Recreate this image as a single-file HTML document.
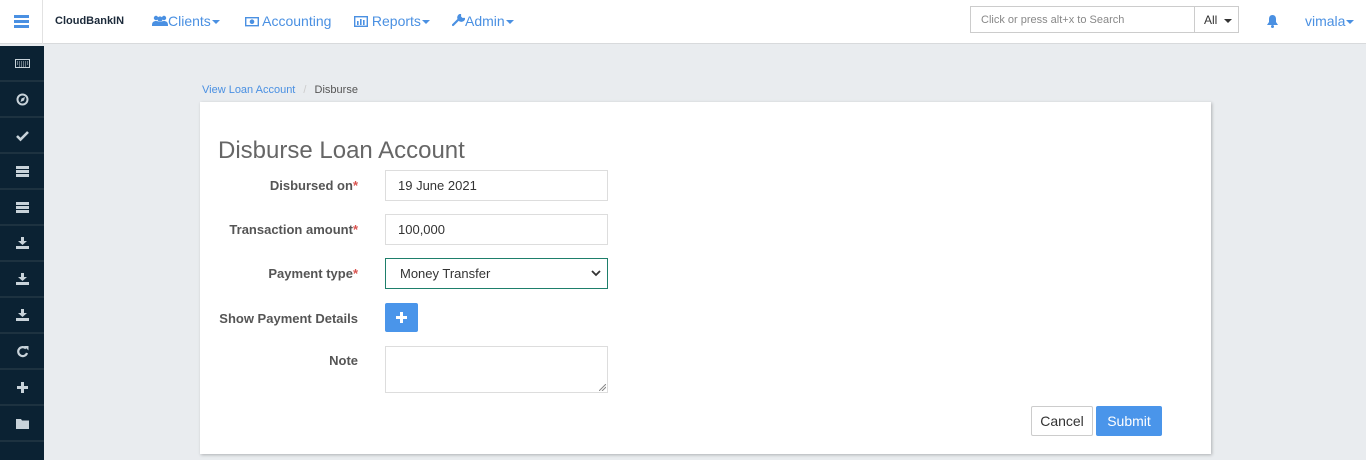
<!DOCTYPE html>
<html><head><meta charset="utf-8"><style>
*{box-sizing:border-box;margin:0;padding:0}
html,body{width:1366px;height:460px;overflow:hidden}
body{background:#e9ecef;font-family:"Liberation Sans",sans-serif;position:relative;font-size:13px;color:#333}
.hdr{position:absolute;left:0;top:0;width:1366px;height:44px;background:#fff;border-bottom:1px solid #d8dadc}
.ham{position:absolute;left:0;top:0;width:43px;height:44px;border-right:1px solid #e2e2e2}
.ham i{position:absolute;left:14px;width:15px;height:3px;background:#4a90e2}
.brand{position:absolute;left:55px;top:15px;font-weight:bold;font-size:11px;color:#1c2a3a}
.nav{position:absolute;top:13px;color:#4a90e2;font-size:14px;white-space:nowrap}
.car{display:inline-block;width:0;height:0;border-left:4px solid transparent;border-right:4px solid transparent;border-top:4px solid currentColor;vertical-align:middle;margin-left:1px}
.search{position:absolute;left:970px;top:6px;width:225px;height:27px;border:1px solid #ccc;border-right:none;color:#888;font-size:11px;padding:7px 10px;white-space:nowrap}
.all{position:absolute;left:1194px;top:6px;width:45px;height:27px;border:1px solid #ccc;font-size:12px;padding:6px 9px;color:#333;white-space:nowrap}
.side{position:absolute;left:0;top:46px;width:44px;height:414px;background:#0b2233;overflow:hidden}
.si{height:36px;border-bottom:2px solid #1d3240;display:flex;align-items:center;justify-content:center}
.si svg{width:15px;height:13px}
.card{position:absolute;left:200px;top:102px;width:1011px;height:352px;background:#fff;box-shadow:1px 1px 3px rgba(0,0,0,.25)}
.lbl{position:absolute;right:1008px;font-weight:bold;color:#555;font-size:13px;text-align:right;white-space:nowrap}
.lbl b{color:#d9534f}
.inp{position:absolute;left:385px;width:223px;height:31px;border:1px solid #ddd;padding:7px 12px;font-size:13px;color:#333;background:#fff}
.btn{position:absolute;font-size:14px;border-radius:2px;text-align:center}
</style></head><body>
<div class="hdr">
 <div class="ham"><i style="top:15px"></i><i style="top:20px"></i><i style="top:25px"></i></div>
 <div class="brand">CloudBankIN</div>
 <div class="nav" style="left:152px"><svg width="16" height="12" viewBox="0 0 16 12" style="vertical-align:-1px"><circle cx="4" cy="3" r="2.2" fill="#4a90e2"/><circle cx="12" cy="3" r="2.2" fill="#4a90e2"/><circle cx="8" cy="4" r="2.6" fill="#4a90e2"/><path d="M0 10c0-3 2-4 4-4s3 1 4 1 2-1 4-1 4 1 4 4v1H0z" fill="#4a90e2"/></svg>Clients<span class="car"></span></div>
 <div class="nav" style="left:245px"><svg width="14" height="11" viewBox="0 0 14 11" style="vertical-align:-1px"><rect x="0.7" y="1.7" width="12.6" height="8" fill="none" stroke="#4a90e2" stroke-width="1.4"/><circle cx="7" cy="5.7" r="2.3" fill="#4a90e2"/></svg> Accounting</div>
 <div class="nav" style="left:354px"><svg width="14" height="11" viewBox="0 0 14 11" style="vertical-align:-1px"><rect x="0.7" y="0.7" width="12.6" height="9.6" fill="none" stroke="#4a90e2" stroke-width="1.4"/><rect x="3" y="5" width="1.6" height="4" fill="#4a90e2"/><rect x="6" y="3" width="1.6" height="6" fill="#4a90e2"/><rect x="9" y="4" width="1.6" height="5" fill="#4a90e2"/></svg> Reports<span class="car"></span></div>
 <div class="nav" style="left:452px"><svg width="13" height="13" viewBox="0 0 13 13" style="vertical-align:-1px"><path d="M1 11l6-6M8 1a3 3 0 1 0 4 4l-2 0-2-2z" stroke="#4a90e2" stroke-width="2.2" fill="#4a90e2" stroke-linecap="round"/></svg>Admin<span class="car"></span></div>
 <div class="search">Click or press alt+x to Search</div>
 <div class="all">All <span class="car" style="margin-left:3px"></span></div>
 <svg style="position:absolute;left:1266px;top:14px" width="13" height="14" viewBox="0 0 13 14"><path d="M6.5 1C4 1 3 3 3 5v3L1 11h11L10 8V5c0-2-1-4-3.5-4z" fill="#4a90e2"/><circle cx="6.5" cy="12.5" r="1.5" fill="#4a90e2"/></svg>
 <div class="nav" style="left:1305px">vimala<span class="car"></span></div>
</div>
<div class="side">
 <div class="si"><svg viewBox="0 0 15 13"><rect x="0.5" y="2.5" width="14" height="8" fill="none" stroke="#c8d3da"/><path d="M2 5h11M2 7h11M4 9h7" stroke="#c8d3da" stroke-dasharray="1 1"/></svg></div>
 <div class="si"><svg viewBox="0 0 15 13"><circle cx="7.5" cy="6.5" r="5" fill="none" stroke="#c8d3da" stroke-width="2"/><path d="M5.5 9l1-3.5 3.5-1.5-1 3.5z" fill="#c8d3da"/></svg></div>
 <div class="si"><svg viewBox="0 0 15 13"><path d="M2 7l3.5 3.5L13 3" fill="none" stroke="#c8d3da" stroke-width="2.6"/></svg></div>
 <div class="si"><svg viewBox="0 0 15 13"><rect x="1" y="1" width="13" height="3" fill="#c8d3da"/><rect x="1" y="5" width="13" height="3" fill="#c8d3da"/><rect x="1" y="9" width="13" height="3" fill="#c8d3da"/></svg></div>
 <div class="si"><svg viewBox="0 0 15 13"><rect x="1" y="1" width="13" height="3" fill="#c8d3da"/><rect x="1" y="5" width="13" height="3" fill="#c8d3da"/><rect x="1" y="9" width="13" height="3" fill="#c8d3da"/></svg></div>
 <div class="si"><svg viewBox="0 0 15 13"><path d="M6 0h3v4h3L7.5 8 3 4h3z" fill="#c8d3da"/><rect x="1" y="9" width="13" height="3" fill="#c8d3da"/></svg></div>
 <div class="si"><svg viewBox="0 0 15 13"><path d="M6 0h3v4h3L7.5 8 3 4h3z" fill="#c8d3da"/><rect x="1" y="9" width="13" height="3" fill="#c8d3da"/></svg></div>
 <div class="si"><svg viewBox="0 0 15 13"><path d="M6 0h3v4h3L7.5 8 3 4h3z" fill="#c8d3da"/><rect x="1" y="9" width="13" height="3" fill="#c8d3da"/></svg></div>
 <div class="si"><svg viewBox="0 0 15 13"><path d="M11 3.5A4.5 4.5 0 1 0 12 8" fill="none" stroke="#c8d3da" stroke-width="2.2"/><path d="M9 1h4.5v4.5z" fill="#c8d3da"/></svg></div>
 <div class="si"><svg viewBox="0 0 15 13"><path d="M6 1h3v4h4v3H9v4H6V8H2V5h4z" fill="#c8d3da"/></svg></div>
 <div class="si"><svg viewBox="0 0 15 13"><path d="M1 2h5l1 1.5h7V12H1z" fill="#c8d3da"/></svg></div>
 <div class="si"><svg viewBox="0 0 15 13"><rect x="6" y="8" width="3" height="5" fill="#c8d3da"/></svg></div>
</div>
<div style="position:absolute;left:202px;top:84px;font-size:11px;color:#4a90e2">View Loan Account <span style="color:#ccc;margin:0 5px">/</span> <span style="color:#555">Disburse</span></div>
<div class="card">
 <div style="position:absolute;left:18px;top:35px;font-size:24px;color:#666">Disburse Loan Account</div>
</div>
<div class="lbl" style="top:178px">Disbursed on<b>*</b></div>
<div class="inp" style="top:170px">19 June 2021</div>
<div class="lbl" style="top:222px">Transaction amount<b>*</b></div>
<div class="inp" style="top:214px">100,000</div>
<div class="lbl" style="top:266px">Payment type<b>*</b></div>
<div class="inp" style="top:258px;border-color:#1e7f6b;padding-left:14px">Money Transfer<svg style="position:absolute;right:6px;top:11px" width="10" height="7" viewBox="0 0 10 7"><path d="M1 1l4 4 4-4" fill="none" stroke="#333" stroke-width="1.8"/></svg></div>
<div class="lbl" style="top:311px">Show Payment Details</div>
<div class="btn" style="left:385px;top:303px;width:33px;height:29px;background:#4a95ea"><svg width="11" height="11" viewBox="0 0 11 11" style="margin-top:9px"><path d="M4 0h3v4h4v3H7v4H4V7H0V4h4z" fill="#fff"/></svg></div>
<div class="lbl" style="top:353px">Note</div>
<div class="inp" style="top:346px;height:47px"><svg style="position:absolute;right:1px;bottom:1px" width="7" height="7"><path d="M0 7L7 0M3 7L7 3" stroke="#888"/></svg></div>
<div class="btn" style="left:1031px;top:406px;width:62px;height:30px;border:1px solid #ccc;background:#fff;color:#333;padding-top:6px">Cancel</div>
<div class="btn" style="left:1096px;top:406px;width:66px;height:30px;background:#4a95ea;color:#fff;padding-top:7px">Submit</div>
</body></html>
